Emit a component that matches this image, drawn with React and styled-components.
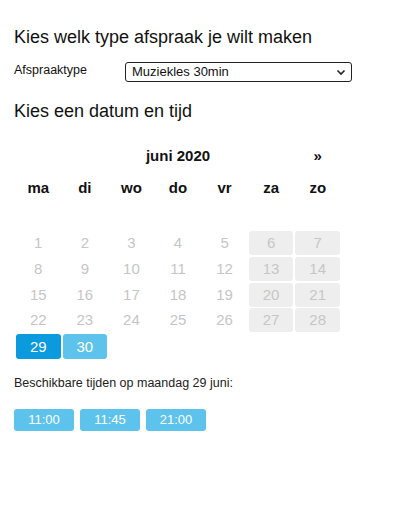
import React from "react"
import styled, { createGlobalStyle } from "styled-components"

const GlobalStyle = createGlobalStyle`
  body {
    margin: 0;
    background: #fff;
    font-family: "Liberation Sans", Arial, sans-serif;
    color: #111;
  }
`

const Page = styled.div`
  padding: 26px 14px 20px 14px;
  width: 406px;
  box-sizing: border-box;
`

const Heading = styled.h2`
  margin: 0;
  font-size: 18px;
  font-weight: normal;
  line-height: 22px;
`

const FieldRow = styled.div`
  display: flex;
  align-items: flex-start;
  margin: 14px 0 18px 0;
`

const Label = styled.label`
  width: 111px;
  font-size: 12.5px;
  line-height: 16px;
`

const SelectBox = styled.div`
  width: 227px;
  height: 20px;
  box-sizing: border-box;
  border: 1px solid #222;
  border-radius: 3px;
  font-size: 13px;
  line-height: 18px;
  padding: 0 5px 0 6px;
  display: flex;
  align-items: center;
  justify-content: space-between;
`

const Calendar = styled.div`
  width: 324px;
  margin: 22px 0 0 2px;
  display: grid;
  grid-template-columns: repeat(7, 1fr);
  column-gap: 2px;
`

const MonthTitle = styled.div`
  grid-column: 2 / span 5;
  text-align: center;
  font-weight: bold;
  font-size: 15px;
  line-height: 24px;
`

const Nav = styled.div`
  text-align: center;
  font-weight: bold;
  font-size: 15px;
  line-height: 24px;
`

const WeekDay = styled.div`
  text-align: center;
  font-weight: bold;
  font-size: 15px;
  line-height: 24px;
  margin-top: 8px;
  margin-bottom: 31px;
`

const Day = styled.div`
  height: 24px;
  margin-bottom: 1.75px;
  border-radius: 3px;
  text-align: center;
  font-size: 15px;
  line-height: 24px;
  color: ${p => (p.$kind === "selected" || p.$kind === "available" ? "#fff" : "#c6c6c6")};
  background: ${p =>
    p.$kind === "selected"
      ? "#0b9ade"
      : p.$kind === "available"
      ? "#5ec3ec"
      : p.$kind === "weekend"
      ? "#eeeeee"
      : "transparent"};
  ${p => (p.$kind === "selected" || p.$kind === "available" ? "height: 25px; line-height: 25px;" : "")}
`

const Info = styled.p`
  margin: 14px 0 0 0;
  font-size: 12.5px;
  line-height: 16px;
  color: #222;
`

const Times = styled.div`
  display: flex;
  gap: 6px;
  margin-top: 18px;
`

const TimeButton = styled.button`
  width: 60px;
  height: 22px;
  border: none;
  border-radius: 3px;
  background: #5ec3ec;
  color: #fff;
  font-family: "Liberation Sans", Arial, sans-serif;
  font-size: 13px;
  padding: 0;
`

const weekdays = ["ma", "di", "wo", "do", "vr", "za", "zo"]

function kindFor(d) {
  if (d === 29) return "selected"
  if (d === 30) return "available"
  const col = (d - 1) % 7
  if (col >= 5) return "weekend"
  return "past"
}

export default function App() {
  const days = []
  for (let d = 1; d <= 30; d++) days.push(d)

  return (
    <Page>
      <GlobalStyle />
      <Heading>Kies welk type afspraak je wilt maken</Heading>
      <FieldRow>
        <Label>Afspraaktype</Label>
        <SelectBox>
          <span>Muziekles 30min</span>
          <svg width="10" height="7" viewBox="0 0 10 7">
            <path d="M1.5 1.5 L5 5 L8.5 1.5" fill="none" stroke="#222" strokeWidth="1.6" />
          </svg>
        </SelectBox>
      </FieldRow>
      <Heading>Kies een datum en tijd</Heading>
      <Calendar>
        <div />
        <MonthTitle>juni 2020</MonthTitle>
        <Nav>»</Nav>
        {weekdays.map(w => (
          <WeekDay key={w}>{w}</WeekDay>
        ))}
        {days.map(d => (
          <Day key={d} $kind={kindFor(d)}>{d}</Day>
        ))}
      </Calendar>
      <Info>Beschikbare tijden op maandag 29 juni:</Info>
      <Times>
        <TimeButton>11:00</TimeButton>
        <TimeButton>11:45</TimeButton>
        <TimeButton>21:00</TimeButton>
      </Times>
    </Page>
  )
}
